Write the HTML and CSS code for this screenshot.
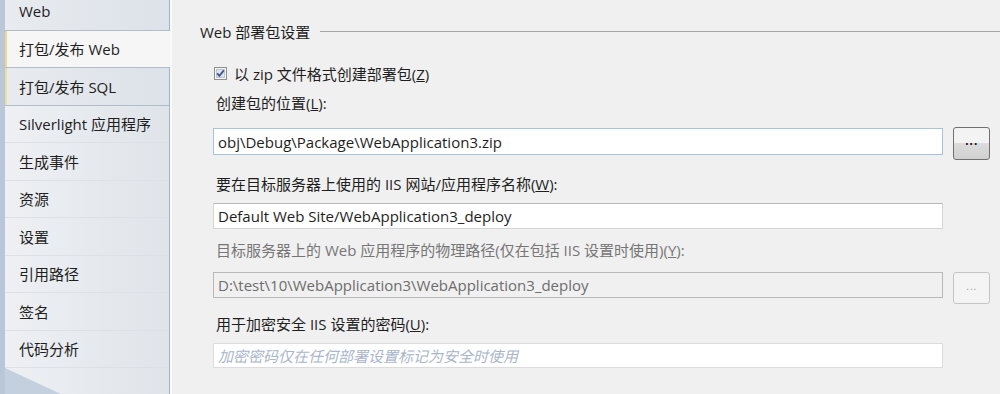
FILE: index.html
```html
<!DOCTYPE html>
<html lang="zh-CN">
<head>
  <meta charset="UTF-8">
  <title>打包/发布 Web</title>
  <link rel="stylesheet" href="styles.css">
</head>
<body>

  <div class="window">

    <nav class="sidebar">
      <div class="tabs">
        <div class="tab boxed">Web</div>
        <div class="tab active">打包/发布 Web</div>
        <div class="tab boxed hot">打包/发布 SQL</div>
        <div class="tab">Silverlight 应用程序</div>
        <div class="tab">生成事件</div>
        <div class="tab">资源</div>
        <div class="tab">设置</div>
        <div class="tab">引用路径</div>
        <div class="tab">签名</div>
        <div class="tab">代码分析</div>
      </div>
      <div class="sidebar-foot"></div>
    </nav>

    <main class="content">
      <div class="group-title">Web 部署包设置</div>

      <div class="fields">
        <div class="check-row">
          <svg class="checkbox" width="13" height="13" viewBox="0 0 13 13">
            <rect x="0.5" y="0.5" width="12" height="12" fill="#f6f6f6" stroke="#8e8f8f"/>
            <rect x="2.5" y="2.5" width="8" height="8" fill="#dde4ec" stroke="#bcc5cf"/>
            <path d="M3.2 6.4 L5.4 8.9 L9.8 3.4" fill="none" stroke="#3f5591" stroke-width="1.8"/>
          </svg>
          <span>以 zip 文件格式创建部署包(<u>Z</u>)</span>
        </div>

        <div class="label label-first">创建包的位置(<u>L</u>):</div>
        <div class="row row-first">
          <input class="text focus" type="text" value="obj\Debug\Package\WebApplication3.zip">
          <button class="browse">...</button>
        </div>

        <div class="label label-gap">要在目标服务器上使用的 IIS 网站/应用程序名称(<u>W</u>):</div>
        <input class="text single" type="text" value="Default Web Site/WebApplication3_deploy">

        <div class="label label-disabled">目标服务器上的 Web 应用程序的物理路径(仅在包括 IIS 设置时使用)(<u>Y</u>):</div>
        <div class="row row-disabled">
          <input class="text" type="text" value="D:\test\10\WebApplication3\WebApplication3_deploy" disabled>
          <button class="browse" disabled>...</button>
        </div>

        <div class="label label-last">用于加密安全 IIS 设置的密码(<u>U</u>):</div>
        <input class="text single password" type="text" placeholder="加密密码仅在任何部署设置标记为安全时使用">
      </div>
    </main>

  </div>

</body>
</html>
```

FILE: styles.css
```css
body {
  margin: 0;
  background: #f0f0f0;
  color: #1e1e1e;
  font-family: "Open Sans", "Noto Sans CJK SC", sans-serif;
  font-size: 15px;
}

.window {
  display: flex;
  height: 394px;
  overflow: hidden;
}

/* left tab strip */
.sidebar {
  width: 164px;
  flex: none;
  display: flex;
  flex-direction: column;
  border-left: 5px solid #bac7d8;
  border-right: 1px solid #a8b3c1;
  background: linear-gradient(to right, #eef0f3, #dfe4ea);
}

.tabs {
  margin-top: -7px;
}

.tab {
  height: 37.5px;
  box-sizing: border-box;
  display: flex;
  align-items: center;
  padding-left: 14px;
  border-bottom: 1px solid #dde1e7;
  white-space: nowrap;
}

.tab.boxed {
  background: linear-gradient(to right, #e8ebef, #dce2e9);
  border-bottom: 1px solid #b3bdca;
}

.tab.hot {
  box-shadow: inset 2px 0 #efdc9f;
}

.tab.active {
  margin-right: -3px;
  background: #f6f6f6;
  border-bottom: 1px solid #b3bdca;
  box-shadow: inset 2px 0 #f0d98c;
}

.sidebar-foot {
  flex: 1;
  position: relative;
}

.sidebar-foot::after {
  content: "";
  position: absolute;
  left: 0;
  top: 0;
  right: 0;
  bottom: 0;
  background: #c5d0de;
  clip-path: polygon(0 0, 56px 100%, 0 100%);
}

/* settings page */
.content {
  flex: 1;
  padding-left: 30px;
  box-shadow: inset 2px 0 #f9f9f9;
}

.group-title {
  display: flex;
  align-items: center;
  height: 20px;
  margin-top: 21px;
}

.group-title::after {
  content: "";
  flex: 1;
  height: 1px;
  margin-left: 10px;
  background: #a6a6a6;
}

.fields {
  padding-left: 13px;
}

.check-row {
  display: flex;
  align-items: center;
  gap: 7px;
  height: 20px;
  margin-top: 22px;
  padding-left: 1px;
}

.label {
  height: 20px;
  line-height: 20px;
  padding-left: 3px;
  white-space: nowrap;
}

.label-first { margin-top: 10px; }
.label-gap { margin-top: 14px; }
.label-disabled { margin-top: 11px; color: #767676; }
.label-last { margin-top: 10px; }

.row {
  display: flex;
  align-items: flex-start;
  gap: 10px;
}

.row-first { margin-top: 14px; }
.row-disabled { margin-top: 12px; }

.text {
  display: block;
  width: 730px;
  height: 26px;
  box-sizing: border-box;
  margin: 0;
  padding: 0 4px;
  border: 1px solid #d4d4d4;
  border-top-color: #b9b9b9;
  background: #fff;
  color: #1e1e1e;
  font: inherit;
  outline: none;
}

.text.focus {
  height: 27px;
  margin-top: 1px;
  border-color: #a7c3dc;
}

.text.single {
  margin-top: 9px;
}

.text.password {
  height: 25px;
  border-color: #dcdcdc;
}

.text.password::placeholder {
  color: #a9b6ca;
  font-style: italic;
}

.text:disabled {
  background: #f0f0f0;
  border-color: #b9b9b9;
  color: #6d6d6d;
}

.browse {
  width: 37px;
  height: 33px;
  padding: 0 0 4px;
  border: 1px solid #707070;
  border-radius: 3px;
  background: linear-gradient(#f3f3f3 50%, #dcdcdc 50%, #d0d0d0);
  color: #222;
  font-family: "DejaVu Sans", sans-serif;
  font-size: 10px;
  font-weight: bold;
  letter-spacing: 0.5px;
}

.browse:disabled {
  height: 32px;
  border-color: #c4c4c4;
  background: #f4f4f4;
  color: #a5a5a5;
  font-weight: normal;
}
```
